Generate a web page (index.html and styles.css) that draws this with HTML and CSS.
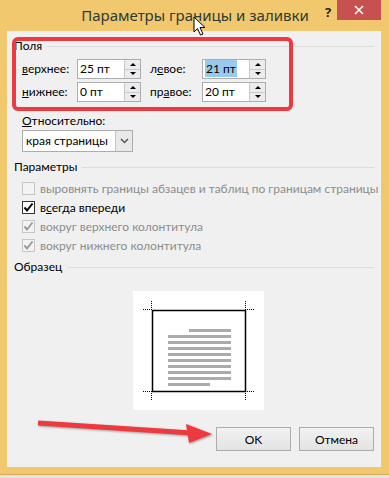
FILE: index.html
```html
<!DOCTYPE html>
<html lang="ru">
<head>
  <meta charset="UTF-8" />
  <title>Параметры границы и заливки</title>
  <link rel="stylesheet" href="styles.css">
</head>
<body>
  <div class="window">
    <div class="titlebar">
      <div class="title">Параметры границы и заливки</div>
      <div class="caption-btns">
        <span class="help">?</span>
        <span class="close">
          <svg width="10" height="10" viewBox="0 0 10 10"><path d="M1 1 L9 9 M9 1 L1 9" stroke="#fff" stroke-width="1.6"/></svg>
        </span>
      </div>
    </div>

    <div class="content">
      <div class="group-head"><span>Поля</span></div>
      <div class="margins">
        <label class="lbl"><u>в</u>ерхнее:</label>
        <div class="spin"><span class="val">25 пт</span><span class="spinbtn"><i class="up"></i><i class="down"></i></span></div>
        <label class="lbl">л<u>е</u>вое:</label>
        <div class="spin"><span class="val"><span class="selected">21 пт</span></span><span class="spinbtn"><i class="up"></i><i class="down"></i></span></div>

        <label class="lbl"><u>н</u>ижнее:</label>
        <div class="spin"><span class="val">0 пт</span><span class="spinbtn"><i class="up"></i><i class="down"></i></span></div>
        <label class="lbl">пр<u>а</u>вое:</label>
        <div class="spin"><span class="val">20 пт</span><span class="spinbtn"><i class="up"></i><i class="down"></i></span></div>
      </div>

      <div class="rel-label"><u>О</u>тносительно:</div>
      <div class="select">
        <span class="val">края страницы</span>
        <span class="drop">
          <svg width="9" height="6" viewBox="0 0 9 6"><path d="M1 1 L4.5 4.5 L8 1" fill="none" stroke="#555" stroke-width="1.5"/></svg>
        </span>
      </div>

      <div class="group-head params-head"><span>Параметры</span></div>
      <div class="checks">
        <div class="check disabled"><span class="box"></span>выровнять границы абзацев и таблиц по границам страницы</div>
        <div class="check"><span class="box"><svg width="11" height="11" viewBox="0 0 11 11"><path d="M1.5 5.5 L4 8.5 L9.5 1.5" fill="none" stroke="#000" stroke-width="2"/></svg></span>в<u>с</u>егда впереди</div>
        <div class="check disabled"><span class="box"><svg width="11" height="11" viewBox="0 0 11 11"><path d="M1.5 5.5 L4 8.5 L9.5 1.5" fill="none" stroke="#9c9c9c" stroke-width="2"/></svg></span>вокруг верхнего колонтитула</div>
        <div class="check disabled"><span class="box"><svg width="11" height="11" viewBox="0 0 11 11"><path d="M1.5 5.5 L4 8.5 L9.5 1.5" fill="none" stroke="#9c9c9c" stroke-width="2"/></svg></span>вокруг нижнего колонтитула</div>
      </div>

      <div class="group-head sample-head"><span>Образец</span></div>
      <div class="preview">
        <svg width="131" height="119" viewBox="0 0 131 119">
          <rect x="0" y="0" width="131" height="119" fill="#fff"/>
          <g stroke="#000" stroke-width="1" stroke-dasharray="1 1">
            <path d="M10 18.5 H19 M18.5 10 V19"/>
            <path d="M112 18.5 H122 M112.5 10 V19"/>
            <path d="M10 100.5 H19 M18.5 100 V109"/>
            <path d="M112 100.5 H122 M112.5 100 V109"/>
          </g>
          <rect x="19.5" y="19.5" width="93" height="81" fill="none" stroke="#000" stroke-width="1.5"/>
          <g fill="#ababab">
            <rect x="56" y="38" width="42" height="3"/>
            <rect x="35" y="44" width="63" height="3"/>
            <rect x="35" y="50" width="63" height="3"/>
            <rect x="35" y="56" width="63" height="3"/>
            <rect x="35" y="62" width="63" height="3"/>
            <rect x="35" y="68" width="63" height="3"/>
            <rect x="35" y="74" width="63" height="3"/>
            <rect x="35" y="80" width="63" height="3"/>
            <rect x="35" y="86" width="63" height="3"/>
            <rect x="35" y="92" width="42" height="3"/>
          </g>
        </svg>
      </div>

      <div class="buttons">
        <button class="btn">OK</button>
        <button class="btn">Отмена</button>
      </div>

      <div class="highlight"></div>
    </div>

    <svg class="arrow" width="389" height="478" viewBox="0 0 389 478">
      <path d="M38 423 L192 433" stroke="#ee3a3f" stroke-width="5"/>
      <path d="M186 424 L212 434 L189 443 Z" fill="#ee3a3f"/>
    </svg>

    <svg class="cursor" width="14" height="21" viewBox="0 0 14 21">
      <path d="M1 1 L1 16 L4.5 12.5 L7.5 19 L10 18 L7 11.5 L12 11.5 Z" fill="#fff" stroke="#000" stroke-width="1"/>
    </svg>
  </div>
</body>
</html>
```

FILE: styles.css
```css
body { margin: 0; background: #e4e4e4; font-family: Lato, "Noto Sans", sans-serif; font-size: 12px; color: #000; }
.window { position: relative; width: 389px; height: 475px; background: #f1c86d; border-bottom: 1px solid #d6ab52; box-sizing: border-box; padding: 0 8px 0 7px; }

.titlebar { height: 31px; display: flex; justify-content: center; }
.title { font-family: "Noto Sans", sans-serif; font-size: 15px; line-height: 30px; color: #2f3a36; padding-left: 2px; }
.caption-btns { position: absolute; top: 0; right: 8px; display: flex; align-items: flex-start; }
.help { font-family: "Noto Sans", sans-serif; font-weight: bold; font-size: 13px; color: #222; width: 18px; line-height: 24px; text-align: center; }
.close { width: 44px; height: 20px; background: #c75050; display: flex; align-items: center; justify-content: center; }

.content { position: relative; height: 436px; background: #f0f0f0; padding: 8px 7px 0 7px; box-sizing: border-box; white-space: nowrap; }

.group-head { display: flex; align-items: center; height: 14px; line-height: 14px; }
.group-head::after { content: ""; flex: 1; border-top: 1px solid #dcdcdc; margin-left: 5px; margin-top: 1px; }
.params-head { margin-top: 8px; }
.sample-head { margin-top: 5px; }

.margins { display: grid; grid-template-columns: 55px 73px 52px 64px; grid-auto-rows: 20px; row-gap: 3px; margin: 6px 0 0 8px; align-items: center; }
.lbl { line-height: 20px; }
.spin { width: 64px; height: 20px; box-sizing: border-box; background: #fff; border: 1px solid #abadb3; display: flex; }
.spin .val { flex: 1; padding-left: 2px; line-height: 18px; }
.selected { background: #99c9ef; padding: 1px 1px; }
.spinbtn { width: 15px; display: flex; flex-direction: column; border-left: 1px solid #c9c9c9; background: #ececec; }
.spinbtn i { flex: 1; display: flex; align-items: center; justify-content: center; }
.spinbtn i.up { border-bottom: 1px solid #c9c9c9; }
.spinbtn i.up::before { content: ""; border: 3px solid transparent; border-bottom: 3px solid #000; border-top: 0; }
.spinbtn i.down::before { content: ""; border: 3px solid transparent; border-top: 3px solid #000; border-bottom: 0; }

.rel-label { margin: 12px 0 0 8px; line-height: 14px; }
.select { margin: 2px 0 0 8px; width: 111px; height: 22px; box-sizing: border-box; background: #fff; border: 1px solid #acacac; display: flex; }
.select .val { flex: 1; padding-left: 3px; line-height: 20px; }
.select .drop { width: 16px; background: #e9e9e9; border-left: 1px solid #c4c4c4; display: flex; align-items: center; justify-content: center; }

.checks { margin: 5px 0 0 8px; }
.check { height: 19px; display: flex; align-items: center; }
.check .box { width: 13px; height: 13px; box-sizing: border-box; border: 1px solid #333; background: #fff; margin-right: 5px; display: flex; align-items: center; justify-content: center; flex-shrink: 0; }
.check.disabled { color: #8c8c8c; }
.check.disabled .box { border-color: #c6c6c6; background: #f3f3f3; }

.preview { margin: 17px 0 0 119px; height: 119px; }
.preview svg { display: block; }

.buttons { display: flex; justify-content: flex-end; gap: 8px; margin-top: 17px; }
.btn { width: 75px; height: 24px; font: inherit; color: #000; background: linear-gradient(#f2f2f2, #e3e3e3); border: 1px solid #acacac; padding: 0; }

.highlight { position: absolute; left: 5px; top: 6px; width: 281px; height: 74px; box-sizing: border-box; border: 4px solid #ec3a40; border-radius: 6px; }

.arrow { position: absolute; left: 0; top: 0; pointer-events: none; filter: drop-shadow(1px 1px 1px rgba(0,0,0,0.35)); }
.cursor { position: absolute; left: 193px; top: 16px; }
```
